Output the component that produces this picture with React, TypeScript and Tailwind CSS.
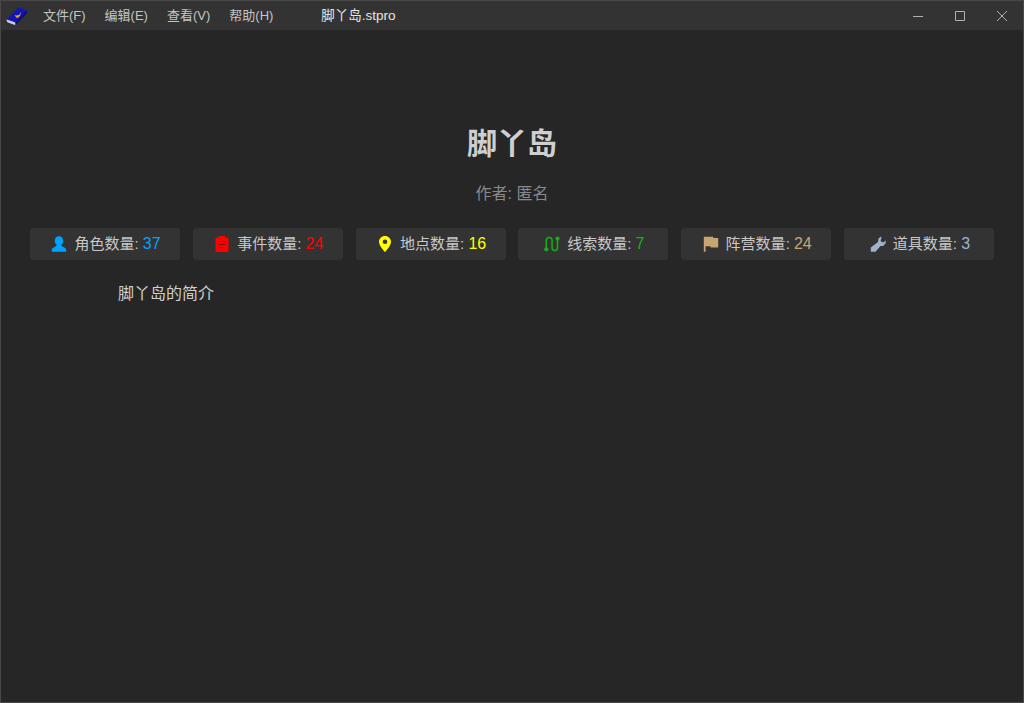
import type { ReactNode } from 'react';

const font = 'font-["Liberation_Sans","Noto_Sans_CJK_SC",sans-serif]';

function UserIcon() {
  return (
    <svg viewBox="0 0 16 16" className="w-4 h-4" fill="currentColor">
      <path d="M8 .3c2.500 0 4.200 1.900 4.200 4.400 0 1.700-.7 3.100-1.700 3.900v1c0 .7 1 1 2.300 1.600 1.400.6 2.200 1.400 2.400 2.600l.1 1.900H.7l.1-1.900c.2-1.200 1-2 2.400-2.600 1.300-.6 2.300-.9 2.300-1.600v-1c-1-.8-1.700-2.200-1.700-3.900C3.800 2.200 5.500.3 8 .3z" />
    </svg>
  );
}

function ClipboardIcon() {
  return (
    <svg viewBox="0 0 16 16" className="w-4 h-4" fill="currentColor">
      <path d="M5 0h6v1.500h2.200c.7 0 1.300.6 1.300 1.300v11.900c0 .7-.6 1.300-1.300 1.300H2.800c-.7 0-1.300-.6-1.300-1.300V2.800c0-.7.6-1.300 1.300-1.300H5z" />
      <path d="M4.500 5.500h7M4.500 8.500h7M4.500 11.500h5" stroke="#7a1010" strokeWidth="1" />
    </svg>
  );
}

function MarkerIcon() {
  return (
    <svg viewBox="0 0 16 16" className="w-4 h-4" fill="currentColor">
      <path fillRule="evenodd" d="M8 0c3.300 0 6 2.500 6 5.700C14 9.400 10 13.800 8 16 6 13.800 2 9.400 2 5.700 2 2.500 4.700 0 8 0zm0 3.500a2.300 2.300 0 100 4.600 2.300 2.300 0 000-4.600z" />
    </svg>
  );
}

function RouteIcon() {
  return (
    <svg viewBox="0 0 16 16" className="w-4 h-4" fill="none" stroke="currentColor" strokeWidth="1.500">
      <path d="M2.300 13V4.300a2.900 2.900 0 015.800 0v7.400a2.700 2.700 0 005.400 0V3" />
      <circle cx="2.300" cy="13.300" r="2.100" fill="currentColor" stroke="none" />
      <circle cx="13.500" cy="2.600" r="2.100" fill="currentColor" stroke="none" />
    </svg>
  );
}

function FlagIcon() {
  return (
    <svg viewBox="0 0 16 16" className="w-4 h-4" fill="currentColor">
      <path d="M.8.800h8.400c.8 0 1.200.4 1.400 1.200h4.600v9.500H8.600c-.8 0-1.200-.4-1.400-1.200H2.600v5.500H.8z" />
    </svg>
  );
}

function WrenchIcon() {
  return (
    <svg viewBox="0 0 16 16" className="w-4 h-4" fill="currentColor">
      <path d="M11 .5 8.500 2.500 8 6 .8 11.500V15.800H5.500L10.500 10H13L15.500 7.500 15.800 4.500 13 6.500 10.500 5 11.500 2z" />
    </svg>
  );
}

function BookLogo() {
  return (
    <svg viewBox="0 0 22 20" className="w-[22px] h-5">
      <path d="M.8 13.500 12.500 1.200l8.500 3.300L9.500 16.500z" fill="#1414b4" />
      <path d="M.8 13.500 9.500 16.500v2.700l-7.500-2.700C.8 16 .4 14.600.8 13.500z" fill="#c9cbe8" />
      <path d="M9.500 16.500 21 4.500V7L9.500 19.200z" fill="#0b0b70" />
      <path d="M8.500 8.500l1.500 1 3-.5 2-3-.8 3.600-2.200 2.400-1.900-.6z" fill="#e0a030" />
    </svg>
  );
}

function Stat({ icon, label, value, color }: { icon: ReactNode; label: string; value: string; color: string }) {
  return (
    <div className="w-[150px] h-8 pl-[2px] flex items-center justify-center gap-[7px] bg-[#333333] rounded-sm text-[15px] text-[#c8c8c8]">
      <span className={color}>{icon}</span>
      <span>
        {label}: <span className={`text-base ${color}`}>{value}</span>
      </span>
    </div>
  );
}

export default function App() {
  return (
    <div className={`${font} h-[703px] flex flex-col bg-[#262626] border border-[#484848] overflow-hidden`}>
      {/* Title bar */}
      <header className="h-[29px] shrink-0 flex items-center bg-[#333333] text-[13px] text-[#c4c4c4]">
        <div className="w-[42px] pl-[5px] flex items-center">
          <BookLogo />
        </div>
        <nav className="flex items-center gap-[19px]">
          <span>文件(F)</span>
          <span>编辑(E)</span>
          <span>查看(V)</span>
          <span>帮助(H)</span>
        </nav>
        <span className="ml-[48px] pt-[2px] text-[13.5px] text-[#e6e6e6]">脚丫岛.stpro</span>
        <div className="ml-auto flex items-center text-[#b0b0b0]">
          <span className="w-[42px] flex justify-center">
            <svg width="12" height="12" viewBox="0 0 12 12" stroke="currentColor"><path d="M1 6.500h10" /></svg>
          </span>
          <span className="w-[42px] flex justify-center">
            <svg width="12" height="12" viewBox="0 0 12 12" fill="none" stroke="currentColor"><path d="M1.500 1.500h9v9h-9z" /></svg>
          </span>
          <span className="w-[42px] flex justify-center">
            <svg width="12" height="12" viewBox="0 0 12 12" stroke="currentColor"><path d="M1 1l10 10M11 1 1 11" /></svg>
          </span>
        </div>
      </header>

      {/* Overview */}
      <main className="flex-1 flex flex-col">
        <h1 className="mt-[91px] text-center text-[30px] leading-[45px] font-bold text-[#cfcfcf]">脚丫岛</h1>
        <p className="mt-[16px] text-center text-base leading-6 text-[#8a8a8a]">作者: 匿名</p>
        <div className="mt-[22px] px-[29px] flex justify-between">
          <Stat icon={<UserIcon />} label="角色数量" value="37" color="text-[#00a2ff]" />
          <Stat icon={<ClipboardIcon />} label="事件数量" value="24" color="text-[#ff0000]" />
          <Stat icon={<MarkerIcon />} label="地点数量" value="16" color="text-[#ffff00]" />
          <Stat icon={<RouteIcon />} label="线索数量" value="7" color="text-[#14b014]" />
          <Stat icon={<FlagIcon />} label="阵营数量" value="24" color="text-[#c8a473]" />
          <Stat icon={<WrenchIcon />} label="道具数量" value="3" color="text-[#9fb3c8]" />
        </div>
        <p className="mt-[22px] ml-[117px] text-base leading-6 text-[#cfcfcf]">脚丫岛的简介</p>
      </main>
    </div>
  );
}
